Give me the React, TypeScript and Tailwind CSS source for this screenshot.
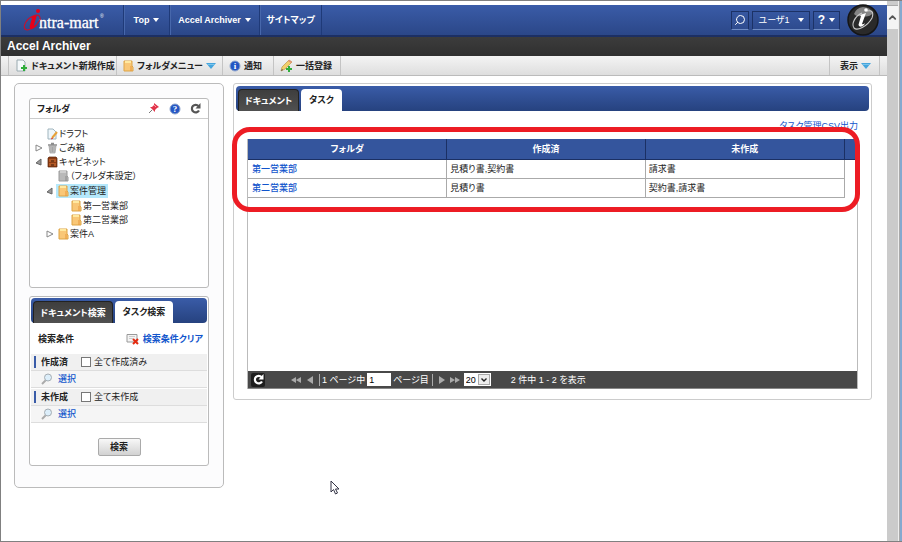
import type { ReactNode } from 'react';
import { ChevronUp, Search } from 'lucide-react';

type TreeItem = {
  label: string;
  icon: 'draft' | 'trash' | 'cabinet' | 'gray' | 'folder';
  pad: string;
  arrow?: 'open' | 'closed';
  selected?: boolean;
};

const treeItems: TreeItem[] = [
  { label: 'ドラフト', icon: 'draft', pad: 'pl-[3px]' },
  { label: 'ごみ箱', icon: 'trash', pad: 'pl-[3px]', arrow: 'closed' },
  { label: 'キャビネット', icon: 'cabinet', pad: 'pl-[3px]', arrow: 'open' },
  { label: '（フォルダ未設定）', icon: 'gray', pad: 'pl-[14px]' },
  { label: '案件管理', icon: 'folder', pad: 'pl-[14px]', arrow: 'open', selected: true },
  { label: '第一営業部', icon: 'folder', pad: 'pl-[27px]' },
  { label: '第二営業部', icon: 'folder', pad: 'pl-[27px]' },
  { label: '案件A', icon: 'folder', pad: 'pl-[14px]', arrow: 'closed' },
];

const tasks = [
  { folder: '第一営業部', done: '見積り書,契約書', pending: '請求書' },
  { folder: '第二営業部', done: '見積り書', pending: '契約書,請求書' },
];

function Logo() {
  return (
    <svg width="84" height="26" viewBox="0 0 84 26" className="shrink-0" role="img" aria-label="intra-mart">
      <text x="16" y="21" fontFamily="Liberation Serif, serif" fontSize="16" fill="#fff" stroke="#fff" strokeWidth="0.3">
        ntra-mart
      </text>
      <text x="77" y="11" fontFamily="Liberation Sans, sans-serif" fontSize="5" fill="#fff">®</text>
      <path d="M10 9C3 12 0 19 2 22C5 25 13 20 17 13C18 8 14 7 10 9" fill="none" stroke="#c8102e" strokeWidth="1.1" />
      <path d="M8 10L14 8L11 18Q11 20 13 18L14 18Q11 22 8 22Q6 21 7 18L9 11Z" fill="#e60019" />
      <circle cx="15" cy="4" r="2" fill="#e60019" />
    </svg>
  );
}

function Badge() {
  return (
    <svg width="32" height="32" viewBox="0 0 32 32" className="shrink-0" role="img" aria-label="intra-mart">
      <circle cx="16" cy="16" r="15" fill="#2a2a2a" stroke="#151515" strokeWidth="1.5" />
      <path d="M7 10Q9 4 16 3Q23 3 26 9Q22 14 15 12Q9 13 7 10Z" fill="#858585" />
      <path d="M15 9C8 12 4 20 7 24C10 27 20 23 25 14C27 8 25 6 20 7" fill="none" stroke="#ccc" strokeWidth="1.1" />
      <path d="M13 11L19 9L15 20Q16 21 18 19L17 21Q14 24 12 22Q11 21 12 19L14 12Z" fill="#fff" />
      <circle cx="19" cy="6" r="1.800" fill="#fff" />
    </svg>
  );
}

function Caret() {
  return (
    <svg width="6" height="4" viewBox="0 0 6 4">
      <path d="M0 0H6L3 4Z" fill="currentColor" />
    </svg>
  );
}

function BlueArrow() {
  return (
    <svg width="10" height="6" viewBox="0 0 10 6">
      <path d="M0 0H10L5 6Z" fill="#45a5dd" />
      <path d="M1 1H9L8 2H2Z" fill="#7cc4ea" />
    </svg>
  );
}

function RefreshIcon() {
  return (
    <svg width="11" height="11" viewBox="0 0 11 11">
      <path d="M8.500 3A3.800 3.800 0 1 0 9 7.500" fill="none" stroke="currentColor" strokeWidth="2.2" />
      <path d="M10.500 0V5.500H5.500Z" fill="currentColor" />
    </svg>
  );
}

function PageIcon() {
  return (
    <svg width="13" height="13" viewBox="0 0 13 13">
      <path d="M2 1H8L10 3V12H2Z" fill="#f5f9fb" stroke="#9aaab0" />
      <path d="M8 6H10V8H12V10H10V12H8V10H6V8H8Z" fill="#2fae3a" />
    </svg>
  );
}

function FolderIcon({ gray = false }: { gray?: boolean }) {
  return (
    <svg width="11" height="12" viewBox="0 0 11 12" className="shrink-0">
      <path d="M1 1H9V6L10 7V11H1Z" fill={gray ? '#b9b9b9' : '#f9c777'} stroke={gray ? '#9a9a9a' : '#dda446'} />
      <path d="M2 1H8V3H2Z" fill={gray ? '#cfcfcf' : '#ffe9a0'} />
      <path d="M8 6V11" stroke={gray ? '#8a8a8a' : '#e8963c'} />
    </svg>
  );
}

function InfoIcon({ mark }: { mark: string }) {
  return (
    <svg width="12" height="12" viewBox="0 0 12 12">
      <circle cx="6" cy="6" r="5" fill="#2456c4" stroke="#8fa5cc" />
      <text x="6" y="9" textAnchor="middle" fontFamily="Liberation Serif, serif" fontWeight="bold" fontSize="9" fill="#fff">
        {mark}
      </text>
    </svg>
  );
}

function PencilIcon() {
  return (
    <svg width="13" height="13" viewBox="0 0 13 13">
      <path d="M1 12L2 8L9 1L12 3L5 10Z" fill="#f3cf6b" stroke="#b9974c" strokeWidth="0.7" />
      <path d="M8 2L9 1L12 3L11 4Z" fill="#e58b7a" />
      <path d="M1 12L2 10L3 11Z" fill="#444" />
      <path d="M8 7H10V9H12V11H10V13H8V11H6V9H8Z" fill="#2fae3a" />
    </svg>
  );
}

function PinIcon() {
  return (
    <svg width="11" height="11" viewBox="0 0 11 11">
      <path d="M1 10L4 7" stroke="#777" />
      <path d="M6 0L11 4L9 5L7 7V9L2 4L4 4L6 2Z" fill="#e0344a" />
      <path d="M6 2L8 4" stroke="#ff9aa4" />
    </svg>
  );
}

function Magnifier() {
  return (
    <svg width="12" height="12" viewBox="0 0 12 12">
      <path d="M1 11L5 7" stroke="#aaa" strokeWidth="2" />
      <circle cx="7" cy="4.5" r="3.5" fill="#dceefa" stroke="#a5adb3" />
    </svg>
  );
}

function ClearIcon() {
  return (
    <svg width="13" height="12" viewBox="0 0 13 12">
      <path d="M1 1.500H11V9H1Z" fill="#f4f4f4" stroke="#999" />
      <path d="M3 3.500H9M3 5.500H7" stroke="#ccc" />
      <path d="M7 6L12 11M12 6L7 11" stroke="#e32a10" strokeWidth="2" />
    </svg>
  );
}

function TreeIcon({ icon }: { icon: TreeItem['icon'] }) {
  if (icon === 'folder') return <FolderIcon />;
  if (icon === 'gray') return <FolderIcon gray />;
  if (icon === 'draft') {
    return (
      <svg width="11" height="12" viewBox="0 0 11 12" className="shrink-0">
        <path d="M1 1H6L9 4V11H1Z" fill="#eef6fa" stroke="#9fb4bd" />
        <path d="M5 10L10 4" stroke="#e8a23a" strokeWidth="2" />
        <path d="M4 11L6 10" stroke="#d33" />
      </svg>
    );
  }
  if (icon === 'trash') {
    return (
      <svg width="11" height="12" viewBox="0 0 11 12" className="shrink-0">
        <path d="M1 3H10M4 1.500H7" stroke="#8d8d8d" strokeWidth="1.3" />
        <path d="M2 4H9L8 11H3Z" fill="#c4c4c4" stroke="#999" strokeWidth="0.7" />
        <path d="M4 5V10M5.500 5V10M7 5V10" stroke="#909090" strokeWidth="0.6" />
      </svg>
    );
  }
  return (
    <svg width="11" height="12" viewBox="0 0 11 12" className="shrink-0">
      <path d="M1 2L2 1H9L10 2V11H1Z" fill="#8a3c14" stroke="#5c250a" strokeWidth="0.7" />
      <path d="M2 3H9V6H2ZM2 7H9V10H2Z" fill="#b45a26" />
      <path d="M4 5H7M4 9H7" stroke="#3b1a08" />
    </svg>
  );
}

function TreeArrow({ type }: { type: 'open' | 'closed' }) {
  return (
    <svg width="8" height="8" viewBox="0 0 8 8">
      {type === 'open' ? (
        <path d="M1 5L6 1V7Z" fill="#999" stroke="#666" />
      ) : (
        <path d="M1 1L7 4L1 7Z" fill="#fff" stroke="#888" />
      )}
    </svg>
  );
}

function NavButton({ children, className = '' }: { children: ReactNode; className?: string }) {
  return (
    <button
      className={`flex items-center justify-center gap-1 border-l border-[#1f3a78] font-bold shadow-[inset_1px_0_0_#4767ab] ${className}`}
    >
      {children}
    </button>
  );
}

function ToolButton({ children, className = '' }: { children: ReactNode; className?: string }) {
  return (
    <button className={`flex items-center gap-[3px] border-r border-[#c4c4c4] pl-[6px] font-bold whitespace-nowrap text-[#222] ${className}`}>
      {children}
    </button>
  );
}

function Tabs({ labels, widths }: { labels: string[]; widths: string[] }) {
  return (
    <div role="tablist" className="flex h-[25px] items-end rounded-sm bg-linear-to-b from-[#3a5ca8] to-[#26427f] pl-[2px]">
      <button role="tab" aria-selected={false} className={`h-[22px] rounded-t-sm border border-b-0 border-[#222] bg-linear-to-b from-[#3e3e3e] to-[#505050] font-bold text-white ${widths[0]}`}>
        {labels[0]}
      </button>
      <button role="tab" aria-selected className={`ml-[2px] h-[22px] rounded-t-sm bg-white font-bold text-[#222] ${widths[1]}`}>
        {labels[1]}
      </button>
    </div>
  );
}

function FolderTree() {
  return (
    <section className="h-[190px] rounded-[3px] border border-[#bbb] bg-white">
      <header className="flex h-5 items-center border-b border-[#ccc] px-[7px]">
        <h2 className="grow font-bold">フォルダ</h2>
        <button aria-label="固定" className="mr-[10px]"><PinIcon /></button>
        <button aria-label="ヘルプ" className="mr-[9px]"><InfoIcon mark="?" /></button>
        <button aria-label="更新" className="text-[#555]"><RefreshIcon /></button>
      </header>
      <ul className="pt-2">
        {treeItems.map((item) => (
          <li key={item.label} className={`flex items-center ${item.selected ? 'h-4' : 'h-[14px]'} ${item.pad}`}>
            <span className="flex w-3 shrink-0 justify-center">
              {item.arrow && <TreeArrow type={item.arrow} />}
            </span>
            <a
              href="#"
              className={`flex items-center gap-px whitespace-nowrap ${item.selected ? 'h-[14px] bg-[#b5e8fb] px-[2px]' : 'pl-[2px]'}`}
            >
              <TreeIcon icon={item.icon} />
              {item.label}
            </a>
          </li>
        ))}
      </ul>
    </section>
  );
}

function Condition({ title, checkLabel, id }: { title: string; checkLabel: string; id: string }) {
  return (
    <div>
      <div className="flex h-[17px] items-center border-b border-[#ddd] bg-[#f0f0f0] pl-[3px]">
        <span className="h-3 w-[2px] bg-[#3a5ca8]" />
        <span className="w-[45px] pl-[5px] font-bold">{title}</span>
        <input id={id} type="checkbox" className="size-[10px] appearance-none border border-[#777] bg-white" />
        <label htmlFor={id} className="pl-[3px]">{checkLabel}</label>
      </div>
      <div className="mb-px flex h-[17px] items-center border-b border-[#ddd] bg-[#f5f5f5] pl-[10px]">
        <Magnifier />
        <a href="#" className="pl-[5px] font-medium text-[#1155cc]">選択</a>
      </div>
    </div>
  );
}

function SearchPanel() {
  return (
    <section className="mt-2 h-[170px] rounded-[3px] border border-[#bbb] bg-white p-px">
      <Tabs labels={['ドキュメント検索', 'タスク検索']} widths={['w-[80px]', 'w-[58px]']} />
      <div className="flex h-[31px] items-center justify-between pr-1 pl-[7px] font-bold">
        <span>検索条件</span>
        <a href="#" className="flex items-center gap-1 text-[#1155cc]">
          <ClearIcon />
          検索条件クリア
        </a>
      </div>
      <Condition id="done" title="作成済" checkLabel="全て作成済み" />
      <Condition id="pending" title="未作成" checkLabel="全て未作成" />
      <div className="flex justify-center pt-[14px]">
        <button className="h-[18px] w-[43px] rounded-xs border border-[#aaa] bg-linear-to-b from-[#f8f8f8] to-[#d2d2d2] font-bold">
          検索
        </button>
      </div>
    </section>
  );
}

function TaskTable() {
  return (
    <table className="w-full table-fixed border-collapse">
      <colgroup>
        <col />
        <col />
        <col />
        <col className="w-[13px]" />
      </colgroup>
      <thead>
        <tr className="h-5 bg-[#34559d] text-white">
          {['フォルダ', '作成済', '未作成'].map((name) => (
            <th key={name} className="border-r border-b border-[#1b3064] p-0 font-bold">{name}</th>
          ))}
          <th className="border-b border-[#1b3064] p-0" />
        </tr>
      </thead>
      <tbody>
        {tasks.map((task) => (
          <tr key={task.folder} className="h-[19px]">
            <td className="border-r border-b border-[#aaa] px-1 py-0">
              <a href="#" className="font-medium text-[#1155cc]">{task.folder}</a>
            </td>
            <td className="border-r border-b border-[#aaa] px-[3px] py-0">{task.done}</td>
            <td className="border-r border-b border-[#aaa] px-[3px] py-0">{task.pending}</td>
            <td className="p-0" />
          </tr>
        ))}
      </tbody>
    </table>
  );
}

function PageArrow({ label, double = false, back = false }: { label: string; double?: boolean; back?: boolean }) {
  return (
    <button aria-label={label}>
      <svg width={double ? 10 : 6} height="8" viewBox={double ? '0 0 10 8' : '0 0 6 8'} className={back ? 'rotate-180' : ''}>
        <path d={double ? 'M0 1L5 4L0 7ZM5 1L10 4L5 7Z' : 'M0 0L6 4L0 8Z'} fill="#aaa" />
      </svg>
    </button>
  );
}

function Pager() {
  return (
    <div className="flex h-[18px] items-center border-b border-[#888] bg-[#484848] pl-[3px] text-white">
      <button aria-label="更新" className="mr-[26px] flex size-[14px] items-center justify-center rounded-xs bg-[#1e1e1e]">
        <RefreshIcon />
      </button>
      <PageArrow label="最初" double back />
      <span className="w-[6px]" />
      <PageArrow label="前へ" back />
      <span className="mr-[2px] ml-[6px] h-3 w-px bg-[#aaa]" />
      <label htmlFor="page" className="whitespace-nowrap">1 ページ中</label>
      <input id="page" defaultValue="1" className="mx-[2px] h-[13px] w-6 bg-white px-[2px] text-black" />
      <span className="whitespace-nowrap">ページ目</span>
      <span className="mr-[6px] ml-[3px] h-3 w-px bg-[#aaa]" />
      <PageArrow label="次へ" />
      <span className="w-[5px]" />
      <PageArrow label="最後" double />
      <div className="relative ml-1">
        <select aria-label="表示件数" className="block h-[13px] w-[27px] appearance-none bg-white pl-[2px] text-black">
          <option>20</option>
        </select>
        <span className="pointer-events-none absolute top-px right-px flex h-[11px] w-3 items-center justify-center border border-[#aaa] bg-[#eee]">
          <svg width="6" height="4" viewBox="0 0 6 4">
            <path d="M0.500 0.500L3 3L5.500 0.500" fill="none" stroke="#222" strokeWidth="1.4" />
          </svg>
        </span>
      </div>
      <span className="pl-5 whitespace-nowrap">2 件中 1 - 2 を表示</span>
    </div>
  );
}

export default function App() {
  return (
    <div className="relative flex min-h-screen border-y border-l border-[#808080] bg-white font-['Liberation_Sans','Noto_Sans_CJK_JP',sans-serif] text-[9px] leading-3 text-[#222] [font-feature-settings:'palt']">
      <div className="flex min-w-0 grow flex-col pt-1">
        <header className="flex h-8 items-stretch border-b-2 border-[#1c2f63] bg-linear-to-b from-[#3a5ca8] to-[#2b4788] text-white">
          <div className="flex w-[122px] shrink-0 items-center pl-[22px]">
            <Logo />
          </div>
          <nav className="flex grow">
            <NavButton className="w-[46px]">Top <Caret /></NavButton>
            <NavButton className="w-[90px]">Accel Archiver <Caret /></NavButton>
            <NavButton className="w-[63px] border-r">サイトマップ</NavButton>
          </nav>
          <div className="flex items-center gap-[3px] pr-2">
            <button aria-label="検索" className="flex h-[19px] w-[18px] items-center justify-center border border-[#1c3266] border-b-[#6f8cc4]">
              <Search size={12} className="-scale-x-100" />
            </button>
            <button className="flex h-[19px] w-[58px] items-center justify-center gap-2 border border-[#1c3266] border-b-[#6f8cc4]">
              ユーザ1 <Caret />
            </button>
            <button className="flex h-[19px] w-[27px] items-center justify-center gap-1 border border-[#1c3266] border-b-[#6f8cc4] text-xs font-bold">
              ? <Caret />
            </button>
            <span className="ml-1 flex"><Badge /></span>
          </div>
        </header>
        <h1 className="h-[19px] bg-linear-to-b from-[#3c3c3c] to-[#303030] pl-[6px] text-[12px] leading-[19px] font-bold text-white">
          Accel Archiver
        </h1>
        <div className="flex h-5 items-stretch border-b border-[#bbb] bg-linear-to-b from-[#f4f4f4] to-[#dedede] pl-[7px]">
          <ToolButton className="w-[109px] border-l"><PageIcon />ドキュメント新規作成</ToolButton>
          <ToolButton className="w-[106px]"><FolderIcon />フォルダメニュー<BlueArrow /></ToolButton>
          <ToolButton className="w-[51px]"><InfoIcon mark="i" />通知</ToolButton>
          <ToolButton className="w-[67px]"><PencilIcon />一括登録</ToolButton>
          <span className="grow" />
          <ToolButton className="mr-[7px] w-[51px] border-l pl-[10px]">表示<BlueArrow /></ToolButton>
        </div>
        <main className="flex items-start gap-[9px] pt-[7px] pr-[15px] pl-[13px]">
          <aside className="w-[210px] shrink-0 rounded-[5px] border border-[#bbb] bg-[#fcfcfd] px-[14px] pt-[14px] pb-[21px]">
            <FolderTree />
            <SearchPanel />
          </aside>
          <section className="min-w-0 grow rounded-[3px] border border-[#ccc] bg-white px-[2px] pt-[2px] pb-[10px]">
            <Tabs labels={['ドキュメント', 'タスク']} widths={['w-[61px]', 'w-[41px]']} />
            <div className="px-[11px] pt-[9px]">
              <div className="flex h-[19px] justify-end">
                <a href="#" className="text-[#1155cc]">タスク管理CSV出力</a>
              </div>
              <div className="relative border-x border-[#bbb]">
                <div className="h-[232px]">
                  <TaskTable />
                </div>
                <Pager />
                <div className="pointer-events-none absolute -top-3 -right-[3px] -left-4 h-[85px] rounded-[18px] border-5 border-[#ed1c24]" />
              </div>
            </div>
          </section>
        </main>
      </div>
      <div className="flex w-[11px] shrink-0 flex-col bg-[#cbcbcb] pt-1">
        <button aria-label="上へ" className="flex h-6 items-center justify-center border-t border-[#aaa] bg-[#f4f4f4]">
          <ChevronUp size={11} strokeWidth={4} className="text-[#555]" />
        </button>
      </div>
      <div className="w-1 shrink-0 border-r-2 border-l border-r-[#85a9cf] border-l-[#eee] bg-[#aaa]" />
      <svg width="10" height="15" viewBox="0 0 10 15" className="absolute top-[479px] left-[329px]">
        <path d="M1 1V12L3.500 9.500L5.500 14L7.500 13L5.500 9H9Z" fill="#fff" stroke="#334" />
      </svg>
    </div>
  );
}
